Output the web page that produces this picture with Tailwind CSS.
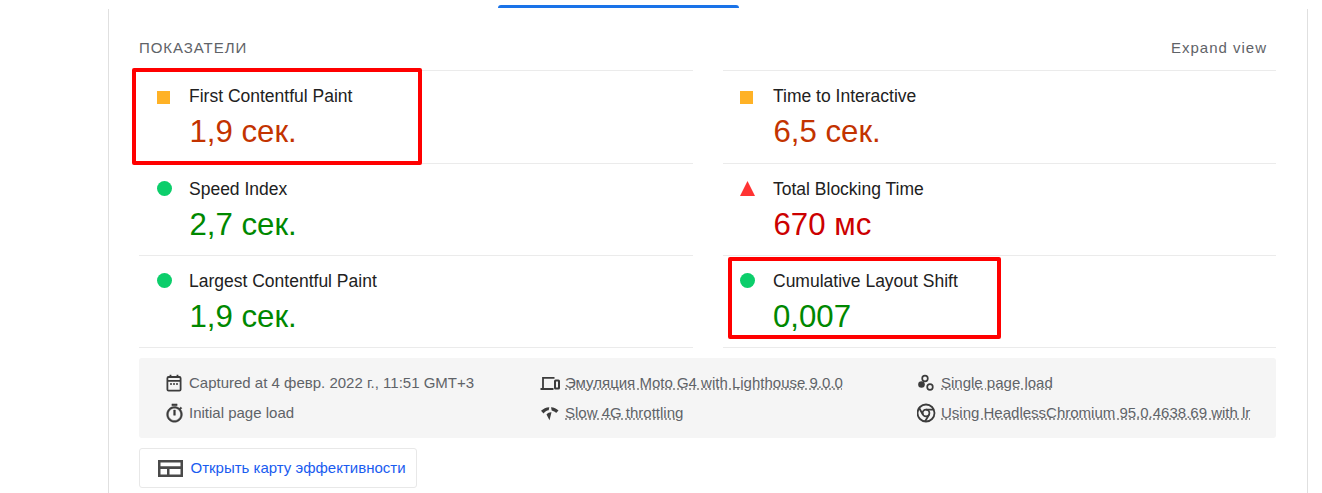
<!DOCTYPE html>
<html lang="en">
  <head>
    <meta charset="UTF-8" />
    <title>PageSpeed Insights</title>
    <script src="https://cdn.jsdelivr.net/npm/@tailwindcss/browser@4"></script>
  </head>
  <body class="bg-white font-['Liberation_Sans',Arial,sans-serif] overflow-hidden h-[493px] relative">
    <!-- Active tab underline -->
    <div class="absolute left-[498px] top-[5px] w-[241px] h-[3px] bg-[#1a73e8] rounded-t-[3px]"></div>

    <main class="relative ml-[108px] mt-[9px] w-[1200px] h-[484px] border-x border-[#e0e0e0] pl-[30px] pr-[30px]">
      <!-- Header -->
      <div class="flex justify-between items-center h-[61px] pt-[18px] text-[15px] text-[#5f6368]">
        <span class="tracking-[0.95px]">ПОКАЗАТЕЛИ</span>
        <span class="pr-[10px] tracking-[1px]">Expand view</span>
      </div>

      <!-- Metrics -->
      <section class="grid grid-cols-[554px_553px] gap-x-[30px] w-[1137px]">
        <div class="border-b border-t border-[#ebebeb] h-[94px] flex">
          <div class="w-[50px] pl-[18px] pt-[20px]"><div class="w-[13px] h-[13px] bg-[#ffa400]/85"></div></div>
          <div>
            <p class="text-[17.5px] leading-[20px] mt-[15px] text-[#212121]">First Contentful Paint</p>
            <p class="text-[31.2px] leading-[36px] mt-[8px] ml-[0.5px] text-[#c33300]">1,9 сек.</p>
          </div>
        </div>
        <div class="border-b border-t border-[#ebebeb] h-[94px] flex">
          <div class="w-[50px] pl-[17px] pt-[20px]"><div class="w-[13px] h-[13px] bg-[#ffa400]/85"></div></div>
          <div>
            <p class="text-[17.5px] leading-[20px] mt-[15px] text-[#212121]">Time to Interactive</p>
            <p class="text-[31.2px] leading-[36px] mt-[8px] ml-[0.5px] text-[#c33300]">6,5 сек.</p>
          </div>
        </div>
        <div class="border-b border-[#ebebeb] h-[92px] flex">
          <div class="w-[50px] pl-[18px] pt-[17px]"><div class="w-[15px] h-[15px] rounded-full bg-[#0cce6b]"></div></div>
          <div>
            <p class="text-[17.5px] leading-[20px] mt-[15px] text-[#212121]">Speed Index</p>
            <p class="text-[31.2px] leading-[36px] mt-[8px] ml-[0.5px] text-[#008800]">2,7 сек.</p>
          </div>
        </div>
        <div class="border-b border-[#ebebeb] h-[92px] flex">
          <div class="w-[50px] pl-[17px] pt-[17px]">
            <svg width="15" height="15" viewBox="0 0 15 15"><path d="M7.500 0 15 15H0z" fill="#ff3333" /></svg>
          </div>
          <div>
            <p class="text-[17.5px] leading-[20px] mt-[15px] text-[#212121]">Total Blocking Time</p>
            <p class="text-[31.2px] leading-[36px] mt-[8px] ml-[0.5px] text-[#cc0000]">670 мс</p>
          </div>
        </div>
        <div class="border-b border-[#ebebeb] h-[92px] flex">
          <div class="w-[50px] pl-[18px] pt-[17px]"><div class="w-[15px] h-[15px] rounded-full bg-[#0cce6b]"></div></div>
          <div>
            <p class="text-[17.5px] leading-[20px] mt-[15px] text-[#212121]">Largest Contentful Paint</p>
            <p class="text-[31.2px] leading-[36px] mt-[8px] ml-[0.5px] text-[#008800]">1,9 сек.</p>
          </div>
        </div>
        <div class="border-b border-[#ebebeb] h-[92px] flex">
          <div class="w-[50px] pl-[17px] pt-[17px]"><div class="w-[15px] h-[15px] rounded-full bg-[#0cce6b]"></div></div>
          <div>
            <p class="text-[17.5px] leading-[20px] mt-[15px] text-[#212121]">Cumulative Layout Shift</p>
            <p class="text-[31.2px] leading-[36px] mt-[8px] text-[#008800]">0,007</p>
          </div>
        </div>
      </section>

      <!-- Run info -->
      <section class="mt-[10px] h-[80px] w-[1137px] bg-[#f5f5f5] rounded-[3px] pl-[26px] pt-[10px] grid grid-cols-[375px_377px_1fr] grid-rows-[30px_30px] text-[15px] text-[#5f6368]">
        <div class="flex items-center">
          <svg class="w-[18px] h-[18px] mr-[6px] shrink-0" viewBox="0 0 18 18" fill="none" stroke="#3c3c3c" stroke-width="1.800"><rect x="2.400" y="3" width="13.200" height="13.600" rx="1.200" /><path d="M2 6.800h14M5.500 .8v3M12.500 .8v3" /><path d="M5 10h2M8 10h2M11 10h2" stroke-width="1.300" /></svg>
          <span>Captured at 4 февр. 2022 г., 11:51 GMT+3</span>
        </div>
        <div class="flex items-center">
          <svg class="w-[20px] h-[18px] mr-[5px] shrink-0" viewBox="0 0 20 18" fill="none" stroke="#3c3c3c" stroke-width="1.800"><path d="M3 14V3.800h11.500M.5 15h13" /><rect x="15" y="6.500" width="4" height="8" rx=".6" stroke-width="2" /></svg>
          <span class="underline decoration-dotted decoration-[#777] underline-offset-[1px]">Эмуляция Moto G4 with Lighthouse 9.0.0</span>
        </div>
        <div class="flex items-center">
          <svg class="w-[18px] h-[18px] mr-[6px] shrink-0" viewBox="0 0 18 18"><circle cx="8" cy="4.500" r="2.800" fill="none" stroke="#3c3c3c" stroke-width="1.700" /><circle cx="4.500" cy="10.500" r="3.300" fill="#3c3c3c" /><circle cx="13" cy="13" r="2.800" fill="none" stroke="#3c3c3c" stroke-width="1.700" /></svg>
          <span class="underline decoration-dotted decoration-[#777] underline-offset-[1px]">Single page load</span>
        </div>
        <div class="flex items-center">
          <svg class="w-[21px] h-[21px] -ml-[1.5px] mr-[4.5px] shrink-0" viewBox="0 0 24 24" fill="#3c3c3c" stroke="#3c3c3c" stroke-width=".5"><path d="M9 1h6v2H9zm2 13h2V8h-2zm8.030-6.610 1.420-1.420c-.43-.51-.9-.99-1.410-1.410l-1.420 1.420C16.070 4.740 14.120 4 12 4c-4.970 0-9 4.030-9 9s4.020 9 9 9 9-4.030 9-9c0-2.120-.74-4.070-1.970-5.610zM12 20c-3.870 0-7-3.130-7-7s3.130-7 7-7 7 3.130 7 7-3.130 7-7 7z" /></svg>
          <span>Initial page load</span>
        </div>
        <div class="flex items-center">
          <svg class="w-[20px] h-[18px] mr-[5px] shrink-0" viewBox="0 0 20 18"><path d="M3.500 9.500 1 6.800C3.300 4.600 6.100 3.400 9.300 3.200L8.700 6.200C6.700 6.500 5 7.500 3.500 9.500zM11 3.300C14 3.600 16.400 4.600 18.500 6.600l-2.400 2.500C14.900 7.800 13.500 7 11.700 6.600zM6.500 10.500c1.400-1.600 3.200-2.400 5-2.200l-2 8z" fill="#3c3c3c" /></svg>
          <span class="underline decoration-dotted decoration-[#777] underline-offset-[1px]">Slow 4G throttling</span>
        </div>
        <div class="flex items-center w-[334px] overflow-hidden">
          <svg class="w-[20px] h-[20px] -ml-[1px] mr-[5px] shrink-0" viewBox="0 0 20 20" fill="none" stroke="#3c3c3c" stroke-width="1.800"><circle cx="10" cy="10" r="8.500" /><circle cx="10" cy="10" r="3.400" /><path d="M10 6.600h8M7 11.700 3 4.800M13 11.700 9 18.500" /></svg>
          <span class="whitespace-nowrap underline decoration-dotted decoration-[#777] underline-offset-[1px]">Using HeadlessChromium 95.0.4638.69 with lr</span>
        </div>
      </section>

      <!-- Treemap button -->
      <button class="mt-[10px] h-[40px] w-[278px] border border-[#e8e8e8] rounded-[3px] flex items-center pl-[18px] text-[15px] text-[#1a5cf0] bg-white">
        <svg class="w-[25px] h-[17px] mr-[7.5px]" viewBox="0 0 25 17"><path fill-rule="evenodd" d="M0 0h25v17H0zM2.500 2.500v3.800h20V2.500zM2.500 9v5.500h6.500V9zM11.500 9v5.500h11V9z" fill="#4a4a4a" /></svg>
        Открыть карту эффективности
      </button>

      <!-- Red annotation boxes -->
      <div class="absolute left-[23px] top-[59px] w-[290px] h-[97px] border-[4px] border-[#ff0000] rounded-[2px]"></div>
      <div class="absolute left-[619px] top-[248px] w-[273px] h-[82px] border-[4px] border-[#ff0000] rounded-[2px]"></div>
    </main>
  </body>
</html>
